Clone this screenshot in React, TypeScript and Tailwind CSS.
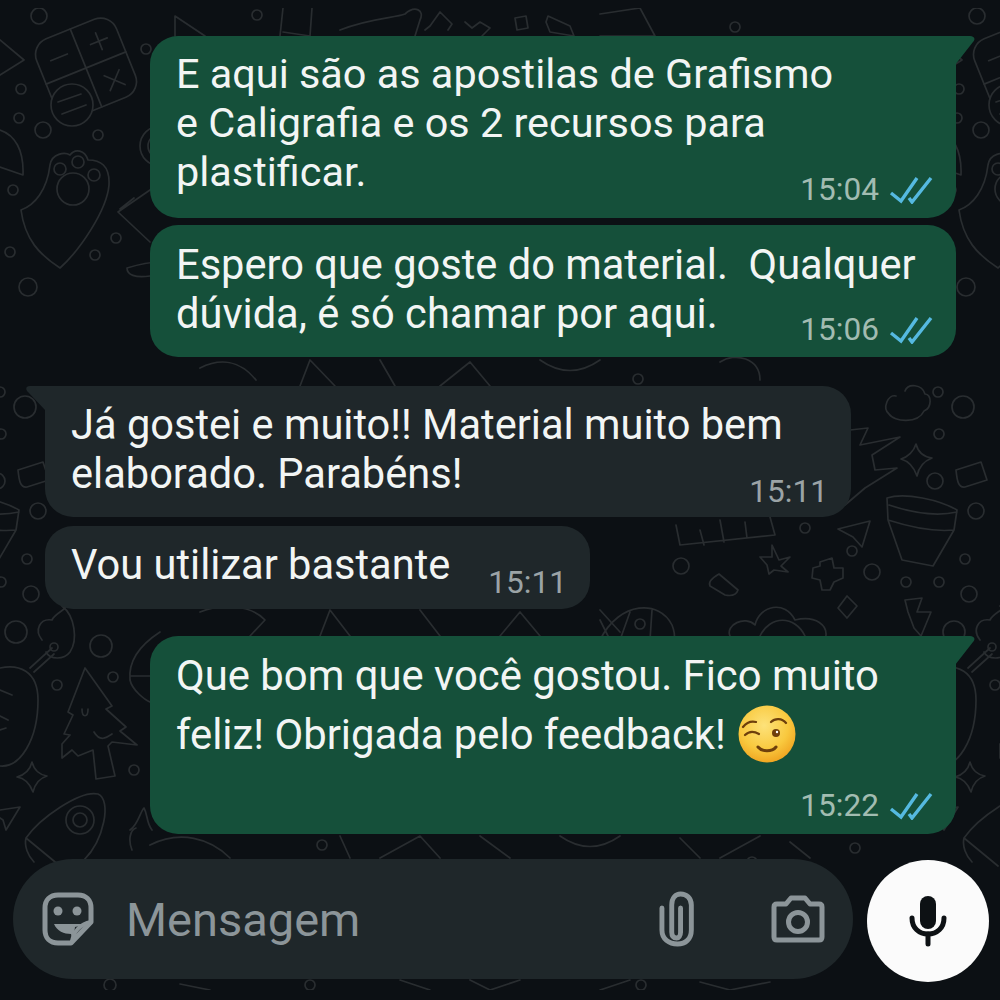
const DOODLE_CIRCLES: [number, number, number][] = [
  [39, 16, 8], [21, 89, 5], [19, 118, 5], [43, 130, 8], [98, 135, 5], [146, 49, 5], [13, 190, 5], [10, 252, 5],
  [28, 287, 9], [95, 255, 5], [116, 238, 5], [16, 632, 11], [101, 646, 11], [57, 685, 5], [113, 677, 5], [134, 770, 5],
  [963, 407, 11], [938, 392, 5], [939, 434, 5], [935, 481, 8], [976, 511, 8], [805, 528, 5], [852, 551, 5],
  [965, 559, 5], [681, 566, 8], [872, 572, 8], [906, 582, 5], [939, 582, 5], [969, 594, 8], [257, 15, 5],
  [638, 379, 5], [735, 27, 5], [752, 862, 5], [640, 624, 5], [322, 845, 5], [110, 985, 6], [310, 985, 5],
  [641, 985, 5], [855, 848, 5],
];

// one tile of the wallpaper, it repeats every 938px
function DoodleTile() {
  return (
    <g>
      {DOODLE_CIRCLES.map(([cx, cy, r]) => (
        <circle key={`${cx}-${cy}`} cx={cx} cy={cy} r={r} />
      ))}
      {/* calculator */}
      <g transform="rotate(-22 86 68)">
        <rect x="43" y="26" width="86" height="84" rx="17" />
        <path d="M86 26V110M43 68H129M56 48H74M99 48H117M108 39V57M100 82L116 98M116 82L100 98" />
      </g>
      <circle cx="72" cy="105" r="21" fill="#0c1014" />
      <path d="M58 102L81 94M62 114L86 105" />
      {/* paw */}
      <path d="M21 210C35 205 47 190 50 165C52 153 65 152 70 155C75 148 85 150 88 160C100 160 110 165 109 185C107 210 80 250 60 268C40 255 25 240 21 210Z" />
      <circle cx="73" cy="189" r="16" />
      <circle cx="60" cy="169" r="6" />
      <circle cx="78" cy="162" r="6" />
      <circle cx="94" cy="175" r="6" />
      <path d="M0 40L24 60L0 75M0 130C15 135 24 150 23 175L0 167M150 190L118 212L150 242M134 198L120 209" />
      <path d="M160 126A20 20 0 1 0 160 166M160 134A12 12 0 1 0 160 158M127 268C140 264 150 262 160 262M127 268C127 275 135 278 150 276" />
      {/* avocado + branch */}
      <path d="M0 668C18 664 38 670 38 700C38 740 20 768 0 766M30 668L52 648M34 672L54 654" />
      <path d="M0 690L12 695M0 716L8 720M0 730L6 728" />
      <circle cx="54" cy="647" r="4" />
      <path d="M42 640C34 630 40 618 52 620C56 612 68 610 66 604M62 606C75 616 78 640 70 652C64 660 50 660 46 652" />
      {/* tree */}
      <path d="M85 668L112 706L106 709L126 727L120 731L137 745L112 742L108 746L115 776L96 779L93 750L78 756L72 750L62 758L62 744L70 735L64 734L73 715L68 712Z" />
      <path d="M82 709C82 718 88 718 88 709M94 732C100 742 106 738 112 734" />
      {/* sparkle */}
      <path d="M32 762C34 770 40 775 47 776C40 778 35 784 33 792C30 784 24 778 17 777C24 775 30 770 32 762Z" />
      {/* rocket */}
      <path d="M26 838C40 818 80 790 98 794C112 800 104 840 84 860M26 838L60 866M26 838C24 846 28 856 34 862" />
      <circle cx="80" cy="820" r="14" />
      <circle cx="80" cy="820" r="7" />
      <path d="M0 810L20 807L6 830L3 820L0 818M130 830C138 825 140 812 144 808C148 815 146 822 152 830M132 850C128 840 130 830 136 828" />
      <path d="M160 632C140 645 128 660 130 680C132 690 145 700 150 702M130 676H150" />
      {/* cloud, sparkle, pot and friends, right part of the tile */}
      <path d="M905 391C908 383 922 384 925 394C932 394 932 408 924 411C918 424 894 422 889 414C882 408 888 394 896 396" />
      <path d="M916 444C918 452 924 457 932 458C924 461 919 466 917 476C914 467 908 461 901 459C908 457 914 451 916 444Z" />
      <path d="M956 470L981 462L987 480L965 487C958 488 957 480 956 470Z" />
      <path d="M887 498C905 492 940 500 957 510L954 530L933 566L902 560L888 520ZM889 505C910 512 935 517 957 512M888 520C910 527 935 532 954 530" />
      <path d="M838 529L870 521L862 547L853 537Z" />
      <path d="M772 545L779 560L790 557L781 566L788 572L774 570L769 574L767 565L760 557L772 557Z" />
      <path d="M820 562L832 558L834 568L843 568L843 578L834 582L830 590L822 590L820 580L812 578L813 568L820 566Z" />
      <path d="M719 574L738 590C736 596 730 596 725 595L710 586C708 582 712 578 719 574Z" />
      <path d="M847 596L857 606L847 618L838 608Z" />
      <path d="M905 600L922 598L917 612L931 612L921 636L914 628L908 612Z" />
      <path d="M850 430L868 428L860 445L900 437L872 455L875 470L897 468L865 488L845 505" />
      {/* croissant, flower */}
      <path d="M600 640C620 600 660 600 672 625C678 640 672 645 668 650M620 640L630 612M650 640L652 610M600 620L610 640" />
      <path d="M730 636C725 625 745 615 755 625C760 605 785 600 795 620C815 615 830 625 825 640" />
      <path d="M760 636C770 615 795 615 805 636" />
      <path d="M676 525L680 545L775 535L770 517M700 530L704 545M720 520L724 542M745 522L747 538" />
      {/* bits along the top edge */}
      <path d="M175 36L175 16L205 36M280 36L283 8M312 8L310 36L283 32M340 30C370 18 395 18 405 14C415 5 425 10 420 20L415 36" />
      <path d="M425 30L430 26L440 12L452 24L448 30M465 22L472 28L480 22L490 28L482 36M515 18L526 16L528 28L517 30ZM548 16L570 26L574 36L550 32L546 22ZM600 14L640 8L655 36L600 36" />
      {/* between the bubbles */}
      <path d="M150 845C180 830 210 838 230 858M340 836L350 858M380 858L420 836L440 858M480 836L510 858M560 836C580 850 600 850 620 836M680 838L700 858M720 858L760 836M790 842L810 858" />
      <path d="M180 984L210 990M400 980L430 990M470 980L490 990L520 980M600 990L630 980M700 982L730 990L770 982" />
      <path d="M200 612C220 604 250 604 265 620L250 636M320 636L330 610L350 636M420 610L440 636M500 636L520 612L540 636M600 610L620 632" />
      <path d="M200 368C220 358 240 360 256 380M300 386L310 360L335 386M380 360L395 386M440 386L470 362L490 386M540 360C560 374 580 374 600 360M720 362C735 352 760 358 760 380" />
    </g>
  );
}

function Ticks() {
  return (
    <svg width="44" height="28" viewBox="0 0 44 28" fill="none" stroke="#55b9e0" strokeWidth="3.4" className="ml-[10px]">
      <path d="M2 17L12 25L28 2" />
      <path d="M20 22L23 26L42 2" />
    </svg>
  );
}

function WinkEmoji() {
  return (
    <svg width="58" height="58" viewBox="0 0 58 58" className="-my-[10px] ml-3 inline-block align-[-4px]">
      <defs>
        <radialGradient id="wink-face" cx="45%" cy="35%" r="70%">
          <stop offset="0%" stopColor="#fde27a" />
          <stop offset="60%" stopColor="#f9c93f" />
          <stop offset="100%" stopColor="#ef9f1c" />
        </radialGradient>
      </defs>
      <circle cx="29" cy="29" r="28.5" fill="url(#wink-face)" />
      <path d="M7 30C11 26 16 26 21 29M5 22C9 17 14 16 18 17M33 17C37 13 44 13 48 18" fill="none" stroke="#6e3f0c" strokeWidth="2.2" strokeLinecap="round" />
      <circle cx="38" cy="28" r="4" fill="#6e3f0c" />
      <circle cx="39" cy="27" r="1.2" fill="#fff" />
      <path d="M20 42C24 47 34 47 38 42" fill="none" stroke="#6e3f0c" strokeWidth="3" strokeLinecap="round" />
    </svg>
  );
}

function OutTail() {
  return (
    <svg width="20" height="29" viewBox="0 0 20 29" className="absolute left-full top-0">
      <path d="M-1 0H14C18 0 20 3 17 6L-1 29Z" fill="#15503a" />
    </svg>
  );
}

function InTail() {
  return (
    <svg width="19" height="25" viewBox="0 0 19 25" className="absolute right-full top-0">
      <path d="M20 0H4C0 0 -1 3 2 6L20 25Z" fill="#1f272a" />
    </svg>
  );
}

function Time({ value, sent }: { value: string; sent?: boolean }) {
  return (
    <div className={`flex h-9 items-center justify-end text-[31.6px] leading-9 ${sent ? "text-[#a2bcb1]" : "text-[#9ba3a6]"}`}>
      <span>{value}</span>
      {sent && <Ticks />}
    </div>
  );
}

export default function App() {
  return (
    <div className="relative h-[1000px] w-[1000px] overflow-hidden bg-[#0c1014] font-['Roboto',sans-serif] text-[41.6px] leading-[49px] text-[#f2f5f4]">
      <svg className="absolute inset-x-0 top-2 h-[982px] w-[1000px]" viewBox="0 8 1000 982" fill="none" stroke="#292d30" strokeWidth="1.7" strokeLinejoin="round" strokeLinecap="round">
        <DoodleTile />
        <g transform="translate(938 0)"><DoodleTile /></g>
        <g transform="translate(-938 0)"><DoodleTile /></g>
      </svg>

      <div className="relative flex flex-col pt-9">
        <div className="relative ml-[150px] w-[806px] rounded-[28px] rounded-tr-none bg-[#15503a] pt-[14px] pr-[23px] pb-[10px] pl-[26px] text-[41.4px]">
          <OutTail />
          <p>E aqui são as apostilas de Grafismo</p>
          <p>e Caligrafia e os 2 recursos para</p>
          <div className="flex items-start justify-between">
            <p>plastificar.</p>
            <div className="mt-6"><Time value="15:04" sent /></div>
          </div>
        </div>

        <div className="mt-[7px] ml-[150px] w-[806px] rounded-[28px] bg-[#15503a] pt-[15px] pr-[23px] pb-[9px] pl-[26px]">
          <p className="whitespace-pre">Espero que goste do material.  Qualquer</p>
          <div className="flex items-start justify-between">
            <p>dúvida, é só chamar por aqui.</p>
            <div className="mt-[23px]"><Time value="15:06" sent /></div>
          </div>
        </div>

        <div className="relative mt-[29px] ml-[45px] w-[806px] rounded-[28px] rounded-tl-none bg-[#1f272a] pt-[14px] pr-[23px] pb-[7px] pl-[26px]">
          <InTail />
          <p>Já gostei e muito!! Material muito bem</p>
          <div className="flex items-start justify-between">
            <p>elaborado. Parabéns!</p>
            <div className="mt-[25px]"><Time value="15:11" /></div>
          </div>
        </div>

        <div className="mt-[9px] ml-[45px] flex w-[545px] items-start justify-between rounded-[28px] bg-[#1f272a] pt-[14px] pr-[23px] pb-2 pl-[26px]">
          <p>Vou utilizar bastante</p>
          <div className="mt-[25px]"><Time value="15:11" /></div>
        </div>

        <div className="relative mt-[27px] ml-[150px] w-[806px] rounded-[28px] rounded-tr-none bg-[#15503a] pt-2.5 pr-[23px] pb-[10px] pl-[26px] text-[41.8px]">
          <OutTail />
          <p className="leading-[59px]">
            Que bom que você gostou. Fico muito
            <br />feliz! Obrigada pelo feedback!
            <WinkEmoji />
          </p>
          <div className="mt-6"><Time value="15:22" sent /></div>
        </div>

        <div className="mt-[25px] ml-[13px] flex items-start gap-[14px]">
          <div className="flex h-[120px] w-[840px] items-center rounded-[60px] bg-[#1f272a] pr-7 pl-[29px] text-[#8c9599]">
            <svg width="52" height="54" viewBox="0 0 52 54" fill="none" stroke="#8c9599" strokeWidth="5" strokeLinejoin="round">
              <path d="M16 3H36C44 3 49 8 49 16V30L29 51H16C8 51 3 46 3 38V16C3 8 8 3 16 3Z" />
              <circle cx="16" cy="19" r="4.5" fill="#8c9599" stroke="none" />
              <circle cx="35" cy="19" r="4.5" fill="#8c9599" stroke="none" />
              <path d="M12 32H47L33 35L31 50L29 42C22 42 15 39 12 32Z" fill="#8c9599" stroke="none" />
              <path d="M30 50C31 40 38 32 49 30" strokeWidth="4" />
            </svg>
            <span className="ml-[32px] flex-1 text-[47px] leading-none">Mensagem</span>
            <svg width="36" height="56" viewBox="0 0 36 56" fill="none" stroke="#8c9599" strokeWidth="5" strokeLinecap="round">
              <path d="M22 17V41C22 45 20 47 18 47C15 47 13 45 13 41V14C13 7 17 3 22 3C28 3 33 7 33 14V39C33 48 27 53 19 53C10 53 3 48 3 39V17" transform="translate(1 0) scale(0.98 1)" />
            </svg>
            <svg width="54" height="48" viewBox="0 0 54 48" fill="none" stroke="#8c9599" strokeWidth="5" strokeLinejoin="round" className="ml-[77px]">
              <path d="M3 12C3 10 4 9 6 9H15L20 3H34L39 9H48C50 9 51 10 51 12V42C51 44 50 45 48 45H6C4 45 3 44 3 42Z" />
              <circle cx="27" cy="27" r="9.5" />
            </svg>
          </div>
          <div className="mt-px flex h-[122px] w-[122px] items-center justify-center rounded-full bg-[#fbfbfb]">
            <svg width="38" height="52" viewBox="0 0 38 52" fill="none">
              <rect x="11" y="1" width="16" height="33" rx="8" fill="#0d1114" />
              <path d="M3 23C3 33 10 39 19 39C28 39 35 33 35 23" stroke="#0d1114" strokeWidth="5" strokeLinecap="round" />
              <path d="M19 39V49" stroke="#0d1114" strokeWidth="5" strokeLinecap="round" />
            </svg>
          </div>
        </div>
      </div>
    </div>
  );
}
